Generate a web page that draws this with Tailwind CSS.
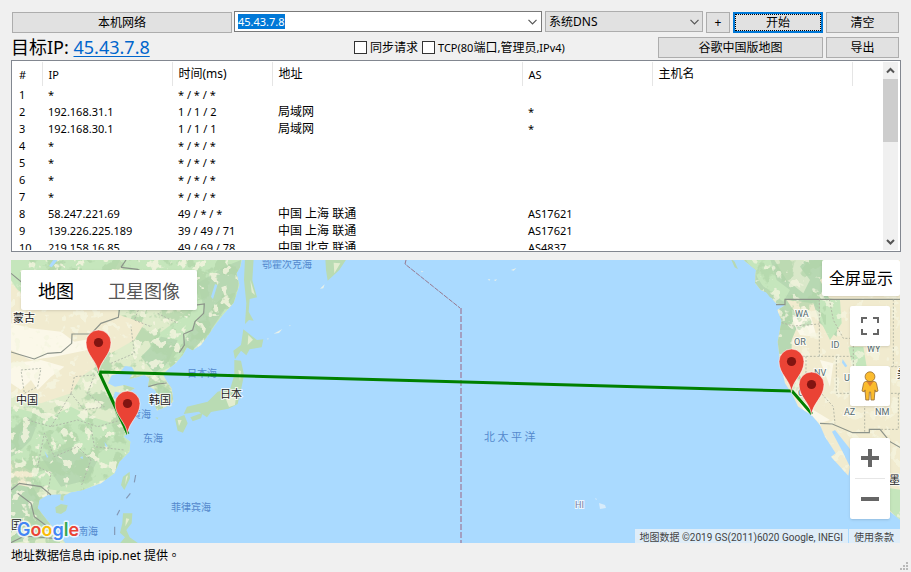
<!DOCTYPE html>
<html lang="zh-CN">
<head>
<meta charset="utf-8">
<meta name="viewport" content="width=device-width, initial-scale=1">
<title>路由追踪</title>
<script src="https://cdn.jsdelivr.net/npm/@tailwindcss/browser@4"></script>
</head>
<body class="flex min-h-screen flex-col bg-[#f0f0f0] pr-[10px] pl-[11px] pt-[11px] font-['Noto_Sans','Noto_Sans_CJK_SC',sans-serif] text-xs text-black">

<form class="flex flex-col gap-1 pr-[2px]" onsubmit="return false">
  <div class="flex h-[22px] gap-[3px]">
    <div class="flex flex-1 gap-[2px]">
      <button type="button" class="ml-px h-[21px] w-[220px] self-end border border-[#adadad] bg-[#e1e1e1] leading-none">本机网络</button>
      <div class="flex h-[21px] flex-1 items-center border border-[#7a7a7a] bg-white">
        <input id="target" aria-label="目标地址" value="45.43.7.8" autofocus class="h-[15px] min-w-0 flex-1 pl-[3px] text-[11px] leading-[14px] outline-none selection:bg-[#0078d7] selection:text-white">
        <button type="button" aria-label="历史记录" class="flex h-full w-[17px] items-center justify-center">
          <svg class="h-[6px] w-[9px]" viewBox="0 0 9 6" fill="none" stroke="#555" stroke-width="1.2"><path d="M.5 .8 4.5 4.8 8.5 .8"/></svg>
        </button>
      </div>
    </div>
    <div class="relative h-[21px] w-[158px]">
      <select aria-label="DNS" class="block h-full w-full appearance-none border border-[#adadad] bg-[#e1e1e1] pl-[3px] leading-none"><option>系统DNS</option></select>
      <svg class="pointer-events-none absolute right-[4px] top-[8px] h-[6px] w-[9px]" viewBox="0 0 9 6" fill="none" stroke="#555" stroke-width="1.2"><path d="M.5 .8 4.5 4.8 8.5 .8"/></svg>
    </div>
    <button type="button" class="h-[21px] w-6 self-end border border-[#adadad] bg-[#e1e1e1] leading-none">+</button>
    <button type="submit" class="h-[21px] w-[90px] self-end border-2 border-[#0078d7] bg-[#e1e1e1] leading-none outline-1 -outline-offset-3 outline-dotted outline-black">开始</button>
    <button type="reset" class="h-[21px] w-[73px] self-end border border-[#adadad] bg-[#e1e1e1] leading-none">清空</button>
  </div>
  <div class="flex h-[21px] items-center gap-[3px]">
    <p class="w-[343px] text-lg leading-[21px]">目标IP: <a href="#" class="text-[#0066cc] underline decoration-1 underline-offset-2">45.43.7.8</a></p>
    <div class="-ml-[3px] flex flex-1 items-center gap-1">
      <label class="flex items-center gap-[3px]"><input type="checkbox" class="size-[13px] appearance-none border border-[#333] bg-white">同步请求</label>
      <label class="flex items-center gap-[3px]"><input type="checkbox" class="size-[13px] appearance-none border border-[#333] bg-white"><span class="text-[11px] leading-4">TCP(80<span class="text-xs">端口</span>,<span class="text-xs">管理员</span>,IPv4)</span></label>
    </div>
    <button type="button" class="h-[21px] w-[165px] border border-[#adadad] bg-[#e1e1e1] leading-none">谷歌中国版地图</button>
    <button type="button" class="h-[21px] w-[73px] border border-[#adadad] bg-[#e1e1e1] leading-none">导出</button>
  </div>
</form>

<section class="mt-[2px] flex h-[192px] border border-[#828790] bg-white p-px pr-[2px]">
  <div class="flex-1 overflow-hidden">
    <table class="w-full table-fixed text-left text-[11px] leading-[17px]">
      <colgroup><col class="w-[29px]"><col class="w-[130px]"><col class="w-[100px]"><col class="w-[250px]"><col class="w-[130px]"><col class="w-[200px]"><col></colgroup>
      <thead>
        <tr class="h-6 *:border-r *:border-[#e5e5e5] *:pl-[6px] *:font-normal">
          <th>#</th><th>IP</th><th class="text-xs">时间(ms)</th><th class="text-xs">地址</th><th>AS</th><th class="text-xs">主机名</th><th class="border-r-0!"></th>
        </tr>
      </thead>
      <tbody class="[&_td]:h-[17px] [&_td]:py-0 [&_td]:pl-[6px] [&_td]:whitespace-nowrap [&_td:nth-child(4)]:text-xs [&_td:nth-child(4)]:leading-[17px]">
        <tr><td>1</td><td>*</td><td>* / * / *</td><td></td><td></td><td></td><td></td></tr>
        <tr><td>2</td><td>192.168.31.1</td><td>1 / 1 / 2</td><td>局域网</td><td>*</td><td></td><td></td></tr>
        <tr><td>3</td><td>192.168.30.1</td><td>1 / 1 / 1</td><td>局域网</td><td>*</td><td></td><td></td></tr>
        <tr><td>4</td><td>*</td><td>* / * / *</td><td></td><td></td><td></td><td></td></tr>
        <tr><td>5</td><td>*</td><td>* / * / *</td><td></td><td></td><td></td><td></td></tr>
        <tr><td>6</td><td>*</td><td>* / * / *</td><td></td><td></td><td></td><td></td></tr>
        <tr><td>7</td><td>*</td><td>* / * / *</td><td></td><td></td><td></td><td></td></tr>
        <tr><td>8</td><td>58.247.221.69</td><td>49 / * / *</td><td>中国 上海 联通</td><td>AS17621</td><td></td><td></td></tr>
        <tr><td>9</td><td>139.226.225.189</td><td>39 / 49 / 71</td><td>中国 上海 联通</td><td>AS17621</td><td></td><td></td></tr>
        <tr><td>10</td><td>219.158.16.85</td><td>49 / 69 / 78</td><td>中国 北京 联通</td><td>AS4837</td><td></td><td></td></tr>
      </tbody>
    </table>
  </div>
  <div class="flex w-[15px] flex-col items-center bg-[#f0f0f0]">
    <svg class="h-[17px] w-[15px]" viewBox="0 0 15 17" fill="none" stroke="#555" stroke-width="2"><path d="M4 10.5 7.5 7 11 10.5"/></svg>
    <div class="h-[63px] w-full bg-[#cdcdcd]"></div>
    <svg class="mt-auto h-[17px] w-[15px]" viewBox="0 0 15 17" fill="none" stroke="#555" stroke-width="2"><path d="M4 7 7.5 10.5 11 7"/></svg>
  </div>
</section>

<main class="relative mt-2 mr-px min-h-[283px] flex-1 overflow-hidden bg-[#aadaff]">
  <svg class="absolute inset-0 h-full w-full" viewBox="0 0 889 283" preserveAspectRatio="xMidYMid slice">
    <defs>
      <path id="asia" d="M-5-5H693L688 20 676 40 685 75 668 128 635 165 612 195 592 225 570 255 545 271 528 262 515 285 495 308 475 325 456 343 468 365 482 385 487 425 465 440 438 452 431 435 442 410 432 390 411 378 415 355 400 345 378 352 355 357 370 333 362 320 342 318 325 340 302 346 291 370 312 380 340 375 372 385 345 400 312 395 306 412 325 430 345 490 353 515 338 530 358 545 355 575 325 605 310 640 270 670 215 690 180 697 158 708 157 722 148 720 150 703 110 705 85 720 80 745 112 785 140 820 165 852H-5Z"/>
      <path id="america" d="M68-5 75 4 108 30 105 68 122 90 142 98 168 130 195 136 172 150 185 182 173 245 180 300 195 370 215 400 235 440 275 465 300 495 315 530 347 580 333 590 385 647 390 620 365 570 336 515 345 510 385 560 440 640 480 710 510 755 545 782V-5Z"/>
      <clipPath id="asiaClip"><use href="#asia"/></clipPath>
      <clipPath id="americaClip"><use href="#america"/></clipPath>
      <clipPath id="asiaPixels"><use href="#asia" transform="scale(.33333)"/></clipPath>
      <clipPath id="americaPixels"><use href="#america" transform="translate(709) scale(.33333)"/></clipPath>
      <filter id="relief" x="0" y="0" width="100%" height="100%" color-interpolation-filters="sRGB">
        <feTurbulence type="fractalNoise" baseFrequency=".06" numOctaves="4" seed="8"/>
        <feColorMatrix values="0 0 0 0 .69  0 0 0 0 .83  0 0 0 0 .66  0 0 14 0 -7.2"/>
      </filter>
      <filter id="plains" x="0" y="0" width="100%" height="100%" color-interpolation-filters="sRGB">
        <feTurbulence type="fractalNoise" baseFrequency=".1" numOctaves="3" seed="21"/>
        <feColorMatrix values="0 0 0 0 .96  0 0 0 0 .96  0 0 0 0 .88  0 16 0 0 -9.6"/>
      </filter>
      <g id="pin">
        <path d="M0 1C-1.200-12-12.500-17-12.500-30a12.500 12.500 0 0 1 25 0C12.500-17 1.200-12 0 1Z" fill="#ea4335" stroke="#fff" stroke-width=".6"/>
        <circle cy="-30" r="4.600" fill="#811411"/>
      </g>
    </defs>

    <!-- East Asia -->
    <g transform="scale(.33333)">
      <use href="#asia" fill="#dfeccb"/>
      <g clip-path="url(#asiaClip)">
        <path fill="#c5e6bc" d="M330-5H700V100L640 180 540 275 500 310 440 340 400 300 430 230 500 180 560 130 440 100 340 60ZM0 440 120 470 180 440 240 470 340 500 380 560 320 640 200 700 60 680 0 600Z"/>
        <path fill="#b7d8b2" d="M560 70 640 20 690 0 680 90 600 210 540 275 515 250 580 150ZM390 290 450 230 500 240 470 310 430 340ZM0 510 50 470 80 490 60 540 20 580 0 590ZM90 590 180 560 260 600 230 660 150 680ZM0 680 60 670 100 740 130 830 0 850ZM440 370 490 400 480 440 440 450Z"/>
        <path fill="#f1ebcf" d="M0 600 70 640 50 680 0 670Z"/>
        <path fill="#c5e6bc" d="M0-5H330L300 50 40 40 60 110 20 90 0 60Z"/>
      </g>
    </g>
    <rect width="250" height="283" filter="url(#relief)" clip-path="url(#asiaPixels)" opacity=".75"/>
    <g transform="scale(.33333)" clip-path="url(#asiaClip)">
      <path fill="#f1ebcf" d="M0 70 40 110 130 150 320 150 330 185 270 250 240 290 255 320 210 350 180 400 90 430 0 400ZM325 165 400 190 370 240 300 280 260 250Z"/>
      <path fill="#fbf8e9" d="M0 190 60 205 150 215 190 245 250 235 230 270 130 290 60 300 0 270ZM0 310 90 300 160 320 120 350 80 390 60 360 30 390 0 370Z"/>
    </g>
    <rect width="250" height="283" filter="url(#plains)" clip-path="url(#asiaPixels)" opacity=".8"/>
    <g transform="scale(.33333)">
      <g fill="#b9dbb3">
        <path d="M133 742 150 732 170 736 165 752 150 762 135 758ZM336 650 356 635 357 655 340 690 330 675ZM336 760H364L362 790 346 810 356 832 385 852H325L342 832 327 818 334 790ZM702-5H728L724 60 738 112 716 117 713 155 728 182 714 180 702 192 706 130 699 60ZM697 208 738 240 757 238 752 262 716 268 706 286 690 272 672 298 667 272 690 255ZM670 300 690 302 699 345 690 390 680 432 652 446 600 456 588 472 563 455 518 462 528 440 590 425 620 395 658 385 670 345ZM492 476 520 465 530 490 516 518 500 512ZM538 472 575 458 570 475 545 484ZM943-5H1008L985 30 950 62 945 30ZM433 472l9 1-3 5Z"/>
      </g>
      <path fill="#e3edd0" d="M718 60l14 45-10-8ZM968 8l20 2-18 30ZM712 225l14 14-16 16ZM345 650l6-4-8 28ZM640 405l35 5-3 25-18 6ZM345 775l10 2-12 22ZM500 480l12 0-8 18ZM682 330l8 3-3 30Z"/>
      <path fill="#e9f1ea" d="M927 86l14-13-4 12ZM788 221l26-14-10 12ZM768 236l5-1-2 4ZM834 196l5 0-2 3ZM1230 32l8 3-6 2ZM1430 58l8 0-3 4ZM1448 60l10-2-4 5ZM1500 30l16-6-8 8Z"/>
      <g fill="none" stroke="#8c938a" stroke-width="3.500">
        <path d="M0 276 30 285 70 297 110 280 150 277 182 250 183 222 240 222 270 190 322 172 325 150 290 130 180 140 60 90 0 40M330 22 345 0M330 22 380 28 410 45 450 90 520 140 580 132 578 160 552 185 545 210 518 222 520 255 505 278M412 380 440 372 467 369M0 690 25 670 90 680 120 705M20 700 60 730 70 770 110 800M0 848 40 828 130 835"/>
      </g>
      <g fill="none" stroke="#acb3a5" stroke-width="2.600" stroke-dasharray="6 5">
        <path d="M30 330 90 325 80 380 40 400ZM180 400 190 350 250 345 230 400 280 440 220 450ZM300 310 370 280 360 200M390 130 370 180 420 200M50 480 120 500 200 480 260 500 330 480M80 620 100 520 130 590 200 560 240 600 210 680M240 500 250 560 340 570M180 400 150 450 120 500M380 40 370 110M440 160 500 190M110 705 120 640 80 620"/>
      </g>
      <path d="M374 645 370 667M358 700 346 715M326 750 318 766M311 800V825" stroke="#8498b5" stroke-width="3.500"/>
      <path fill="#aadaff" d="M100 572l12 18-4 4ZM600 110l12-38 7 4-13 42ZM280 545l10 14-6 2ZM207 592l8-3 0 9ZM140 0l-18 22-8-4 14-20ZM480 42l12-12 1 8Z"/>
    </g>

    <!-- North America -->
    <g transform="translate(709) scale(.33333)">
      <use href="#america" fill="#f1ebcf"/>
      <g clip-path="url(#americaClip)">
        <path fill="#b7d8b2" d="M60-5H380L300 60 330 120 355 150 350 230 300 190 280 130 200 120 240 180 215 240 215 290 250 370 300 420 260 400 200 350 170 300 165 230 180 150 120 100Z"/>
        <path fill="#c5e6bc" d="M75-5H150L170 60 210 90 190 125 130 80ZM300 110 360 120 365 190 330 240 300 180ZM385 260 400 330 440 320 430 260ZM480 680 545 690V790L500 740Z"/>
        <path fill="#d9e8c9" d="M160-5 200 60 250 100 270 60 240 20 260-5ZM200 330 240 360 260 440 215 400Z"/>
        <path fill="#fbf8e9" d="M215 150 270 160 290 230 240 225 220 190ZM300 300 340 310 330 380ZM225 400 280 450 330 480 300 490 250 450ZM440 540 470 580 455 600Z"/>
      </g>
    </g>
    <g clip-path="url(#americaPixels)" opacity=".7">
      <rect x="725" width="90" height="70" filter="url(#relief)"/>
      <rect x="725" width="164" height="283" filter="url(#plains)"/>
    </g>
    <g transform="translate(709) scale(.33333)">
      <path fill="#b7d8b2" d="M32-5 44 5 54 28 44 22ZM120 72l20 14 26 32-16-6Z"/>
      <g fill="none" stroke="#8c938a" stroke-width="3.500"><path d="M168 134H195V118H545M300 490 337 492 398 518H448V508H480L510 545 545 565"/></g>
      <g fill="none" stroke="#aeb0a0" stroke-width="2.600" stroke-dasharray="6 5">
        <path d="M185 188 220 198 298 192M298 118V289M182 289H400M328 118 340 180 370 235H390M258 289V350L340 440 345 490M349 289V400H545M434 400V515M535 400V508H480M400 235V320H545M520 118V320"/>
      </g>
      <path fill="#aadaff" d="M368 298l14 20-6 4-10-14Z"/>
    </g>
    <path fill="#d8ecfb" d="m584 238 2 1-1 1ZM588 243l6 2 1 3-6 1Z"/>

    <path d="M395 0 394 4 449 48" fill="none" stroke="#96788f" stroke-dasharray="5 1"/>
    <path d="M450 48V283" stroke="#a39fc0" stroke-width="2" stroke-dasharray="6 2"/>

    <!-- Sea names -->
    <g class="font-['Noto_Sans_CJK_SC',sans-serif] text-[10px]" fill="#5489cd">
      <text x="251" y="8">鄂霍次克海</text>
      <text x="176" y="117">日本海</text>
      <text x="120" y="158">黄海</text>
      <text x="132" y="182">东海</text>
      <text x="160" y="251">菲律宾海</text>
      <text x="67" y="275">南海</text>
      <text x="473" y="181" class="text-[11px]">北 太 平 洋</text>
    </g>
    <!-- Country and state names -->
    <g class="font-['Noto_Sans_CJK_SC',sans-serif] text-[11px]" fill="#222" stroke="#fff" stroke-opacity=".8" stroke-width="2" paint-order="stroke">
      <text x="2" y="62">蒙古</text>
      <text x="5" y="144">中国</text>
      <text x="138" y="144">韩国</text>
      <text x="209" y="138">日本</text>
      <text x="0" y="269">国</text>
      <text x="878" y="224">墨西</text>
      <text x="886" y="118">美</text>
    </g>
    <g class="font-[Roboto,sans-serif] text-[9px]" fill="#546b70" stroke="#fff" stroke-opacity=".75" stroke-width="2" paint-order="stroke">
      <text x="784" y="57">WA</text><text x="783" y="85">OR</text><text x="820" y="88">ID</text><text x="856" y="92">WY</text>
      <text x="803" y="116">NV</text><text x="833" y="121">UT</text><text x="787" y="136">CA</text><text x="833" y="155">AZ</text><text x="864" y="155">NM</text>
      <text x="564" y="248" fill="#7b7fa5">HI</text>
    </g>

    <g fill="none" stroke="#008000" stroke-width="3" stroke-linejoin="round">
      <path d="M117 174 88 112 781 131 801 154"/>
    </g>
    <use href="#pin" x="87.500" y="112.500"/><use href="#pin" x="116.500" y="173.500"/>
    <use href="#pin" x="780.500" y="131.500"/><use href="#pin" x="800.500" y="154.500"/>
  </svg>

  <div class="absolute left-[10px] top-[10px] flex h-10 rounded-xs bg-white font-['Noto_Sans_CJK_SC',sans-serif] text-lg shadow-sm">
    <button type="button" class="px-[17px]">地图</button>
    <button type="button" class="px-[17px] text-[#565656]">卫星图像</button>
  </div>

  <button type="button" class="absolute top-0 right-0 h-9 rounded-xs bg-white px-[7px] text-base shadow-sm">全屏显示</button>

  <div class="absolute top-[46px] right-[10px] flex w-10 flex-col gap-5">
    <button type="button" aria-label="全屏" class="flex size-10 items-center justify-center rounded-xs bg-white shadow-sm">
      <svg class="size-[18px]" viewBox="0 0 18 18" fill="none" stroke="#666" stroke-width="2"><path d="M1 6V1H6M12 1H17V6M17 12V17H12M6 17H1V12"/></svg>
    </button>
    <button type="button" aria-label="街景小人" class="flex size-10 items-center justify-center rounded-xs bg-white shadow-sm">
      <svg class="h-[30px] w-[18px]" viewBox="0 0 18 30"><path d="M4.500 10.500h9q1.500.3 2 2L17 20l-2.300.9-.7-2-.8 10.100H10l-.4-8H8.400L8 29H4.800L4 18.900l-.7 2L1 20l1.500-7.500q.5-1.700 2-2Z" fill="#fbbc2e" stroke="#946b34" stroke-width=".8"/><path d="M5.500 10.500h7L9 15.500Z" fill="#e0812f"/><circle cx="9" cy="5.700" r="4.900" fill="#fbbc2e" stroke="#946b34" stroke-width=".8"/></svg>
    </button>
  </div>

  <div class="absolute right-[10px] bottom-6 flex w-10 flex-col items-center rounded-xs bg-white shadow-sm">
    <button type="button" aria-label="放大" class="flex size-10 items-center justify-center"><svg class="size-[18px]" viewBox="0 0 18 18" fill="#666"><path d="M7 0h4v7h7v4h-7v7H7v-7H0V7h7Z"/></svg></button>
    <div class="h-px w-[30px] bg-[#e6e6e6]"></div>
    <button type="button" aria-label="缩小" class="flex size-10 items-center justify-center"><svg class="size-[18px]" viewBox="0 0 18 18" fill="#666"><path d="M0 7h18v4H0Z"/></svg></button>
  </div>

  <svg role="img" aria-label="Google" class="absolute bottom-0 left-[5px] h-[28px] w-[70px] font-[Inter,sans-serif] text-[18px] font-semibold" viewBox="0 0 70 28">
    <text x="1" y="21" stroke="#fff" stroke-opacity=".8" stroke-width="3" stroke-linejoin="round" paint-order="stroke"><tspan fill="#4285f4">G</tspan><tspan fill="#ea4335">o</tspan><tspan fill="#fbbc05">o</tspan><tspan fill="#4285f4">g</tspan><tspan fill="#34a853">l</tspan><tspan fill="#ea4335">e</tspan></text>
  </svg>

  <footer class="absolute right-0 bottom-0 flex h-[14px] gap-px font-[Roboto,'Noto_Sans_CJK_SC',sans-serif] text-[10px] leading-[17px] text-[#444]">
    <span class="bg-[#f5f5f5]/70 px-[5px] whitespace-nowrap">地图数据 ©2019 GS(2011)6020 Google, INEGI</span>
    <a href="#" class="bg-[#f5f5f5]/70 pr-[6px] pl-[5px] whitespace-nowrap">使用条款</a>
  </footer>
</main>

<div class="-mr-[7px] flex h-[29px] items-end justify-between">
  <p class="self-start pt-1 leading-4">地址数据信息由 ipip.net 提供<span class="font-['Noto_Sans_CJK_TC',sans-serif]" lang="zh-TW">。</span></p>
  <svg class="mb-[2px] size-2" viewBox="0 0 8 8" fill="#b8b8b8"><path d="M6 0h2v2H6ZM3 3h2v2H3ZM6 3h2v2H6ZM0 6h2v2H0ZM3 6h2v2H3ZM6 6h2v2H6Z"/></svg>
</div>

<script>
  document.getElementById('target').select();
</script>
</body>
</html>
